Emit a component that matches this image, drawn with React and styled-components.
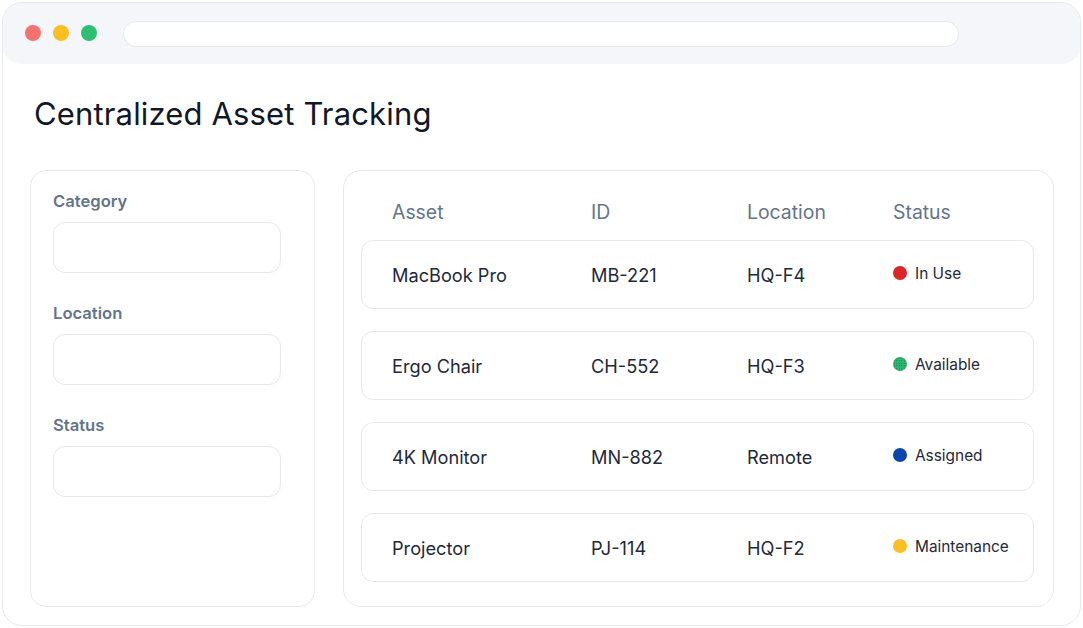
import React from "react";
import styled, { createGlobalStyle } from "styled-components";

const GlobalStyle = createGlobalStyle`
  html, body {
    margin: 0;
    padding: 0;
    background: #ffffff;
    font-family: Inter, "Noto Sans", "Liberation Sans", sans-serif;
  }
  * { box-sizing: border-box; }
`;

const assets = [
  { name: "MacBook Pro", id: "MB-221", location: "HQ-F4", status: "In Use", tone: "red" },
  { name: "Ergo Chair", id: "CH-552", location: "HQ-F3", status: "Available", tone: "green" },
  { name: "4K Monitor", id: "MN-882", location: "Remote", status: "Assigned", tone: "blue" },
  { name: "Projector", id: "PJ-114", location: "HQ-F2", status: "Maintenance", tone: "yellow" },
];

const filters = ["Category", "Location", "Status"];

const App = () => {
  return (
    <>
      <GlobalStyle />
      <Window>
        <TopBar>
          <Dots>
            <Dot color="#f87171" />
            <Dot color="#fbbf24" />
            <Dot color="#2fbf71" />
          </Dots>
          <AddressBar />
        </TopBar>
        <Body>
          <Title>Centralized Asset Tracking</Title>
          <Panels>
            <FilterPanel>
              {filters.map((f) => (
                <Field key={f}>
                  <Label>{f}</Label>
                  <InputBox />
                </Field>
              ))}
            </FilterPanel>
            <TablePanel>
              <HeaderRow>
                <HeadCell>Asset</HeadCell>
                <HeadCell>ID</HeadCell>
                <HeadCell>Location</HeadCell>
                <HeadCell>Status</HeadCell>
              </HeaderRow>
              <Rows>
                {assets.map((a) => (
                  <Row key={a.id}>
                    <Cell>{a.name}</Cell>
                    <Cell>{a.id}</Cell>
                    <Cell>{a.location}</Cell>
                    <StatusCell>
                      <StatusDot tone={a.tone} />
                      {a.status}
                    </StatusCell>
                  </Row>
                ))}
              </Rows>
            </TablePanel>
          </Panels>
        </Body>
      </Window>
    </>
  );
};
export default App;

const Window = styled.div`
  margin: 2px;
  width: 1079px;
  height: 624px;
  border: 1px solid #e6e9f1;
  border-radius: 20px;
  overflow: hidden;
  background: #ffffff;
  display: flex;
  flex-direction: column;
`;

const TopBar = styled.div`
  height: 62px;
  margin: -1px -1px 0;
  background: #f5f6fa;
  border-radius: 20px;
  display: flex;
  align-items: center;
  padding: 0 122px 0 23px;
  gap: 26px;
`;

const Dots = styled.div`
  display: flex;
  gap: 12px;
`;

const Dot = styled.span`
  width: 16px;
  height: 16px;
  border-radius: 50%;
  background: ${(p) => p.color};
`;

const AddressBar = styled.div`
  flex: 1;
  height: 26px;
  margin-top: 2px;
  background: #ffffff;
  border: 1px solid #e4e8f1;
  border-radius: 13px;
`;

const Body = styled.div`
  flex: 1;
  padding: 0 26px 0 27px;
  display: flex;
  flex-direction: column;
`;

const Title = styled.h1`
  margin: 28px 0 0 4px;
  height: 43px;
  line-height: 43px;
  font-size: 31px;
  font-weight: 400;
  color: #111827;
  letter-spacing: 0.15px;
`;

const Panels = styled.div`
  margin-top: 35px;
  display: grid;
  grid-template-columns: 285px 711px;
  gap: 28px;
  height: 437px;
`;

const FilterPanel = styled.div`
  border: 1px solid #e6e9f1;
  border-radius: 16px;
  padding: 20px 22px;
  display: flex;
  flex-direction: column;
  gap: 30px;
`;

const Field = styled.div`
  display: flex;
  flex-direction: column;
  gap: 10px;
`;

const Label = styled.div`
  font-size: 16.6px;
  line-height: 21px;
  font-weight: 600;
  color: #64748b;
`;

const InputBox = styled.div`
  width: 228px;
  height: 51px;
  border: 1px solid #e6e9f1;
  border-radius: 12px;
  background: #ffffff;
`;

const TablePanel = styled.div`
  border: 1px solid #e6e9f1;
  border-radius: 18px;
  padding: 0 19px 0 17px;
  display: flex;
  flex-direction: column;
`;

const columns = "199px 156px 146px 1fr";

const HeaderRow = styled.div`
  display: grid;
  grid-template-columns: ${columns};
  padding: 29px 31px 0;
  height: 69px;
`;

const HeadCell = styled.div`
  font-size: 19.4px;
  line-height: 24px;
  color: #64748b;
`;

const Rows = styled.div`
  display: flex;
  flex-direction: column;
  gap: 22px;
`;

const Row = styled.div`
  display: grid;
  grid-template-columns: ${columns};
  align-items: center;
  height: 69px;
  padding: 0 30px;
  border: 1px solid #e6e9f1;
  border-radius: 12px;
`;

const Cell = styled.div`
  font-size: 18.2px;
  color: #1e293b;
  margin-top: 1px;
`;

const toneColors = {
  red: "#dc2626",
  green: "#2cb673",
  blue: "#0b46ad",
  yellow: "#fbbf24",
};

const StatusCell = styled.div`
  display: flex;
  align-items: center;
  gap: 8px;
  font-size: 15.4px;
  color: #1e293b;
  margin-top: -3px;
`;

const StatusDot = styled.span`
  width: 14px;
  height: 14px;
  border-radius: 50%;
  background-color: ${(p) => toneColors[p.tone]};
  ${(p) =>
    p.tone === "green" &&
    `background-image: radial-gradient(circle, rgba(10, 80, 45, 0.75) 0.5px, transparent 0.8px);
     background-size: 2.5px 2.5px;`}
`;
